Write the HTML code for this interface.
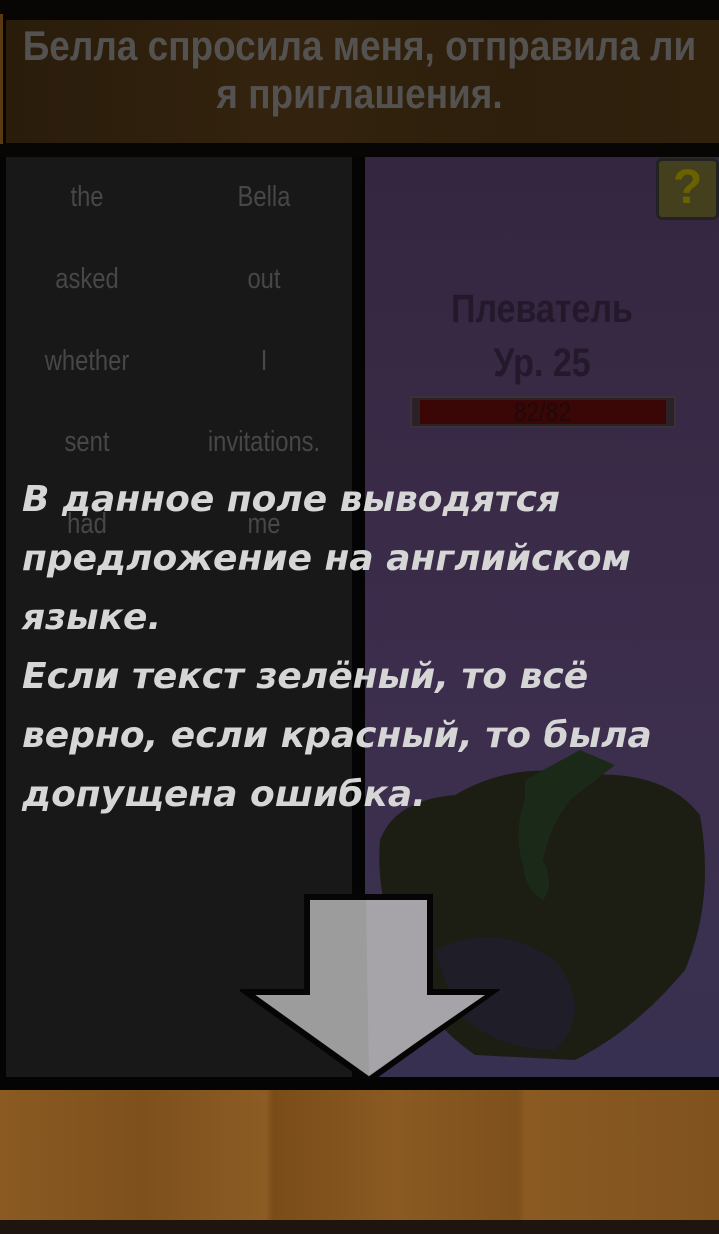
<!DOCTYPE html>
<html><head><meta charset="utf-8"><style>
*{margin:0;padding:0;box-sizing:border-box}
body{width:719px;height:1234px;overflow:hidden;background:#070605;position:relative;font-family:"Liberation Sans",sans-serif}
.abs{position:absolute}
.w{position:absolute;width:176px;text-align:center;font-size:29px;color:#474747;transform:translate(-88px,-17px) scaleX(.82)}
.ov{position:absolute;left:22px;top:470px;font-family:"DejaVu Sans",sans-serif;font-style:italic;font-weight:bold;font-size:36px;line-height:59px;color:#d6d6d6;white-space:nowrap}
</style></head><body>
<div class="abs" style="left:0;top:0;width:719px;height:14px;background:#070605"></div>
<div class="abs" style="left:0;top:14px;width:3px;height:130px;background:#5a3a10"></div>
<div class="abs" style="left:6px;top:20px;width:713px;height:123px;background:linear-gradient(90deg,#2a1c0b,#33230e 40%,#2d1f0c 70%,#30210d)"></div>
<div class="abs" style="left:-40px;top:22px;width:799px;text-align:center;font-weight:bold;font-size:42px;line-height:48px;color:#545250;transform:scaleX(.88)">Белла спросила меня, отправила ли<br>я приглашения.</div>
<div class="abs" style="left:6px;top:157px;width:346px;height:920px;background:#181818"></div>
<div class="abs" style="left:365px;top:157px;width:354px;height:920px;background:linear-gradient(180deg,#342640 0%,#3a2b48 40%,#3c2f4e 70%,#383050 100%)"></div>
<svg class="abs" style="left:365px;top:700px" width="354" height="377">
<path d="M15 140 Q30 100 90 95 Q150 60 220 75 Q300 70 335 115 Q350 200 320 270 Q270 330 210 360 L110 355 Q60 320 40 270 Q10 200 15 140Z" fill="#1c1d13"/>
<path d="M70 250 Q130 220 190 260 Q230 310 190 350 Q130 350 90 310Z" fill="#1e1d28"/>
<path d="M160 80 L215 50 L250 65 L205 100 Q185 125 178 160 Q190 185 178 200 Q160 190 158 165 Q148 130 160 100Z" fill="#1b2a18"/>
</svg>
<div class="abs" style="left:352px;top:157px;width:13px;height:920px;background:#050404"></div>
<div class="abs" style="left:0;top:157px;width:6px;height:920px;background:#050404"></div>
<div class="w" style="left:87px;top:198px">the</div>
<div class="w" style="left:264px;top:198px">Bella</div>
<div class="w" style="left:87px;top:280px">asked</div>
<div class="w" style="left:264px;top:280px">out</div>
<div class="w" style="left:87px;top:362px">whether</div>
<div class="w" style="left:264px;top:362px">I</div>
<div class="w" style="left:87px;top:443px">sent</div>
<div class="w" style="left:264px;top:443px">invitations.</div>
<div class="w" style="left:87px;top:525px">had</div>
<div class="w" style="left:264px;top:525px">me</div>
<div class="abs" style="left:656px;top:158px;width:63px;height:62px;background:#44401e;border:3px solid #222;border-radius:6px"></div>
<div class="abs" style="left:656px;top:158px;width:63px;text-align:center;font-weight:bold;font-size:48px;color:#6a6200;line-height:60px">?</div>
<div class="abs" style="left:340px;top:282px;width:404px;text-align:center;font-weight:bold;font-size:40px;line-height:54px;color:#23192a;transform:scaleX(.85)">Плеватель<br>Ур. 25</div>
<div class="abs" style="left:410px;top:396px;width:266px;height:32px;background:#2a2226;border:2px solid #3a3236"></div>
<div class="abs" style="left:420px;top:400px;width:246px;height:24px;background:#3a0606"></div>
<div class="abs" style="left:407px;top:396px;width:271px;text-align:center;font-size:27px;line-height:32px;color:#1e0a0a;transform:scaleX(.85)">82/82</div>
<div class="abs" style="left:0;top:1077px;width:719px;height:13px;background:#050404"></div>
<div class="abs" style="left:0;top:1090px;width:719px;height:130px;background:linear-gradient(90deg,#8a5a22,#7e501c 20%,#8c5c24 37%,#7a4c18 38%,#8a5a22 55%,#7e501c 72%,#8a5a22 73%,#80521e 100%)"></div>
<div class="abs" style="left:0;top:1220px;width:719px;height:14px;background:#1e1510"></div>
<svg class="abs" style="left:240px;top:892px" width="260" height="195">
<path d="M67 5 H190 V100 H252 L129 188 L6 100 H67Z" fill="#9c9c9c" stroke="#050505" stroke-width="6" stroke-linejoin="miter"/>
<path d="M126 8 H187 V103 H245 L129 183Z" fill="#a6a4a8"/>
</svg>
<div class="ov">В данное поле выводятся<br>предложение на английском<br>языке.<br>Если текст зелёный, то всё<br>верно, если красный, то была<br>допущена ошибка.</div>
</body></html>
